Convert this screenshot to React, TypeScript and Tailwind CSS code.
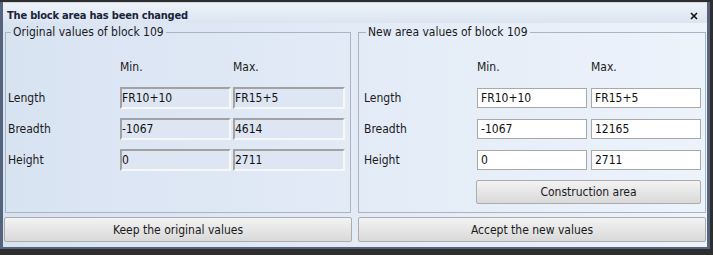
import React from "react";

const font = { fontFamily: '"DejaVu Sans Condensed", "DejaVu Sans", Tahoma, sans-serif' };

function OldBox({ v, w }: { v: string; w: string }) {
  return (
    <div
      className={`${w} h-[22px] flex items-center border-2 border-t-[#a2a2a2] border-l-[#a2a2a2] border-b-[#f7f7f7] border-r-[#f7f7f7] bg-[#dde6f2] text-[12px] leading-none text-[#111] overflow-hidden whitespace-nowrap`}
    >
      {v}
    </div>
  );
}

function NewBox({ v }: { v: string }) {
  return (
    <div className="w-[110px] h-[20px] flex items-center border border-[#a9a9a9] bg-white pl-[3px] text-[12px] leading-none text-[#111] overflow-hidden whitespace-nowrap">
      {v}
    </div>
  );
}

function Btn({ children, className }: { children: React.ReactNode; className: string }) {
  return (
    <div
      className={`${className} flex items-center justify-center border border-[#acacac] rounded-[2px] bg-gradient-to-b from-[#f3f3f3] to-[#d9d9d9] text-[12px] text-[#1a1a1a]`}
    >
      {children}
    </div>
  );
}

export default function App() {
  const oldRows = [
    ["Length", "FR10+10", "FR15+5"],
    ["Breadth", "-1067", "4614"],
    ["Height", "0", "2711"],
  ];
  const newRows = [
    ["Length", "FR10+10", "FR15+5"],
    ["Breadth", "-1067", "12165"],
    ["Height", "0", "2711"],
  ];
  return (
    <div style={font} className="w-[713px] h-[255px] bg-[#2e2e2e] pt-[2px] pr-[3px] pb-[6px]">
      <div className="h-full flex flex-col border-l-[3px] border-r-[3px] border-b-[2px] border-[#56637c] bg-gradient-to-r from-[#d8e3f2] to-[#edf3fb]">
        {/* title bar */}
        <div className="h-[21px] shrink-0 flex items-center justify-between pl-[4px] pr-[9px] pt-[5px] border-t border-[#cfd7e2] bg-gradient-to-b from-[#eef3f9] to-[#dbe4f0]">
          <div className="text-[11px] tracking-[-0.2px] font-bold leading-[14px] text-[#17233a] whitespace-nowrap">
            The block area has been changed
          </div>
          <svg width="8" height="8" viewBox="0 0 8 8">
            <path d="M1 1 L7 7 M7 1 L1 7" stroke="#111" strokeWidth="1.6" />
          </svg>
        </div>
        {/* body */}
        <div className="flex-1 flex gap-[6px] pl-[1px] pr-[1px]">
          {/* left column */}
          <div className="w-[348px] flex flex-col">
            <fieldset className="mt-[2px] mx-[1px] h-[188px] border border-[#a8b5c6] px-0">
              <legend className="ml-[5px] px-[2px] text-[12px] leading-[15px] text-[#1a1a1a]">
                Original values of block 109
              </legend>
              <div className="mt-[20px] h-[15px] flex pl-[114px] text-[12px] leading-[15px] text-[#1a1a1a]">
                <div className="w-[113px]">Min.</div>
                <div>Max.</div>
              </div>
              <div className="mt-[12px] flex flex-col gap-[9px]">
                {oldRows.map(([l, a, b]) => (
                  <div key={l} className="h-[22px] flex items-center pl-[2px]">
                    <div className="w-[112px] text-[12px] text-[#1a1a1a]">{l}</div>
                    <div className="flex gap-[2px]">
                      <OldBox v={a} w="w-[111px]" />
                      <OldBox v={b} w="w-[112px]" />
                    </div>
                  </div>
                ))}
              </div>
            </fieldset>
            <Btn className="mt-[4px] h-[25px]">Keep the original values</Btn>
          </div>
          {/* right column */}
          <div className="w-[348px] flex flex-col">
            <fieldset className="mt-[2px] mx-[0px] h-[188px] border border-[#a8b5c6] px-0">
              <legend className="ml-[7px] px-[2px] text-[12px] leading-[15px] text-[#1a1a1a]">
                New area values of block 109
              </legend>
              <div className="mt-[20px] h-[15px] flex pl-[118px] text-[12px] leading-[15px] text-[#1a1a1a]">
                <div className="w-[114px]">Min.</div>
                <div>Max.</div>
              </div>
              <div className="mt-[12px] flex flex-col gap-[9px]">
                {newRows.map(([l, a, b]) => (
                  <div key={l} className="h-[22px] flex items-center pl-[5px]">
                    <div className="w-[113px] text-[12px] text-[#1a1a1a]">{l}</div>
                    <div className="flex gap-[4px]">
                      <NewBox v={a} />
                      <NewBox v={b} />
                    </div>
                  </div>
                ))}
              </div>
              <Btn className="mt-[9px] ml-[117px] w-[225px] h-[24px]">Construction area</Btn>
            </fieldset>
            <Btn className="mt-[4px] h-[25px]">Accept the new values</Btn>
          </div>
        </div>
      </div>
    </div>
  );
}
